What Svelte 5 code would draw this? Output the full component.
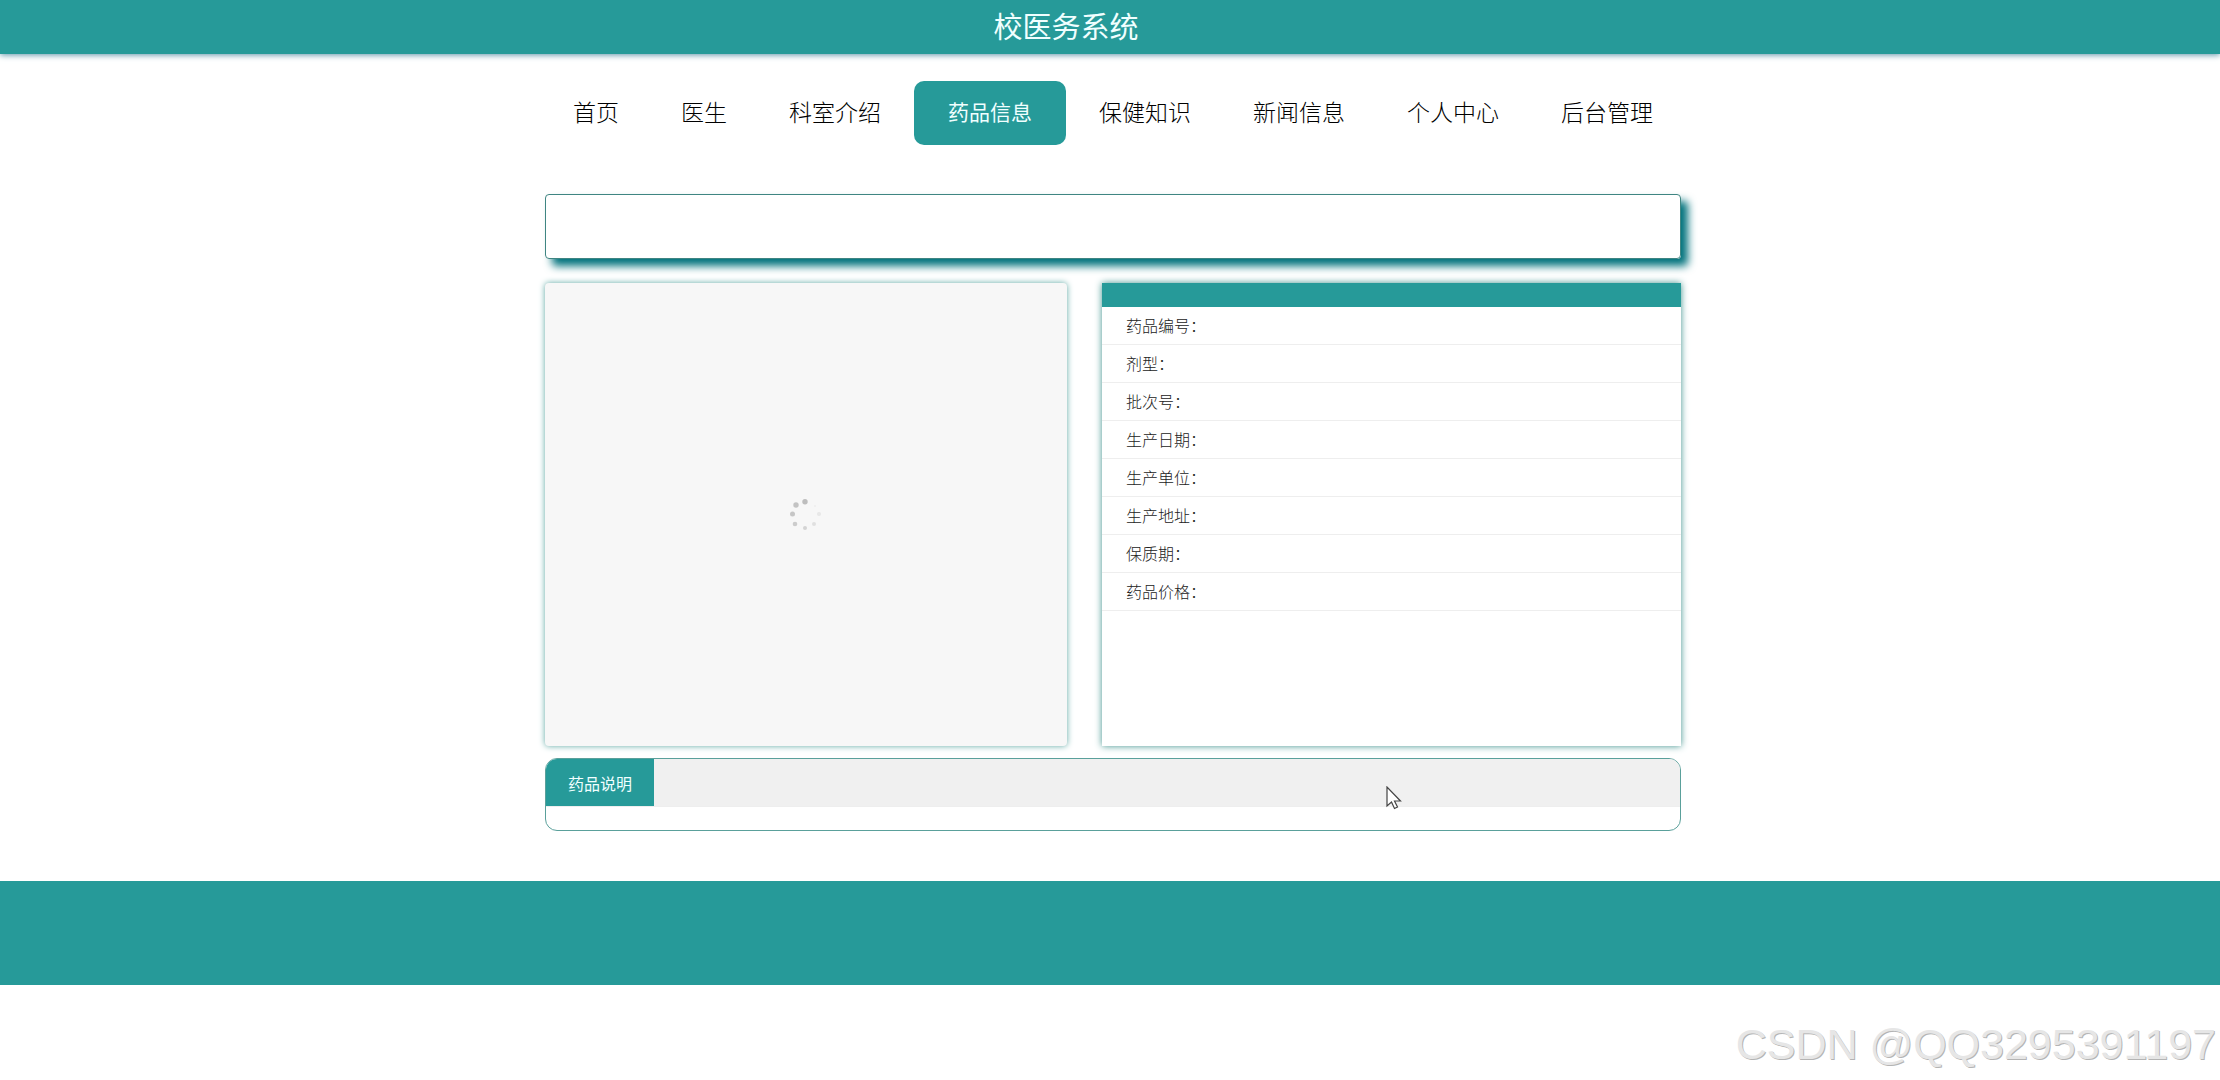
<script lang="ts">
	const menus = ['首页', '医生', '科室介绍', '药品信息', '保健知识', '新闻信息', '个人中心', '后台管理'];
	const fields = ['药品编号', '剂型', '批次号', '生产日期', '生产单位', '生产地址', '保质期', '药品价格'];

	// loading dots, clockwise from the top right
	const dots = [
		{ x: 25, y: 7, r: 1, opacity: 0.15 },
		{ x: 29, y: 15, r: 2, opacity: 0.25 },
		{ x: 24, y: 25, r: 2, opacity: 0.4 },
		{ x: 15, y: 29, r: 2, opacity: 0.6 },
		{ x: 5, y: 25, r: 2.3, opacity: 0.75 },
		{ x: 2.5, y: 15, r: 2.5, opacity: 0.85 },
		{ x: 6, y: 6, r: 2.7, opacity: 0.9 },
		{ x: 15, y: 2.8, r: 2.7, opacity: 1 }
	];

	let active = $state('药品信息');
</script>

<header class="header">
	<h1>校医务系统</h1>
</header>

<main class="page">
	<nav class="nav">
		{#each menus as menu}
			<a href="#{menu}" class:active={menu === active} onclick={() => (active = menu)}>{menu}</a>
		{/each}
	</nav>

	<div class="title-box"></div>

	<div class="detail">
		<div class="picture">
			<svg class="loading" viewBox="0 0 32 32" aria-hidden="true">
				{#each dots as dot}
					<circle cx={dot.x} cy={dot.y} r={dot.r} opacity={dot.opacity} />
				{/each}
			</svg>
		</div>
		<div class="info">
			<div class="info-head"></div>
			<ul>
				{#each fields as field}
					<li>{field}：</li>
				{/each}
			</ul>
		</div>
	</div>

	<section class="tabs">
		<div class="tab-bar">
			<button type="button">药品说明</button>
		</div>
		<div class="tab-body"></div>
	</section>
</main>

<footer class="footer"></footer>

<div class="watermark">CSDN @QQ3295391197</div>

<svg class="cursor" viewBox="0 0 16 24" aria-hidden="true">
	<path d="M1 1v19l4.5-4 3 6.5 3-1.5-3-6h6z" />
</svg>

<style>
	:global(body) {
		margin: 0;
		background: #fff;
		font-family: 'Noto Sans CJK SC', sans-serif;
	}
	.header {
		display: flex;
		justify-content: center;
		padding: 0 88px 4px 0;
		background: #269a99;
		box-shadow: 0 1px 6px #5d93a8;
	}
	.header h1 {
		margin: 0;
		color: #f0ffff;
		font-size: 29px;
		font-weight: 400;
		line-height: 50px;
	}
	.page {
		max-width: 1136px;
		margin: 0 auto;
		padding: 27px 0 50px 6px;
	}
	.nav {
		display: flex;
		justify-content: center;
		margin-bottom: 49px;
	}
	.nav a {
		flex-shrink: 0;
		padding: 0 31px 4px;
		color: #000;
		font-size: 23px;
		font-weight: 300;
		line-height: 60px;
		text-decoration: none;
	}
	.nav a.active {
		margin: 0 2px;
		padding: 0 34px 4px;
		border-radius: 10px;
		background: #269a99;
		color: #f0ffff;
		font-size: 21px;
		font-weight: 400;
	}
	.title-box {
		box-sizing: border-box;
		height: 65px;
		margin-bottom: 24px;
		border: 1px solid #3f8582;
		border-radius: 4px;
		box-shadow: 7px 7px 8px #00727c;
	}
	.detail {
		display: grid;
		grid-template-columns: 522fr 579fr;
		gap: 35px;
		height: 463px;
		margin-bottom: 12px;
	}
	.picture {
		display: flex;
		justify-content: center;
		align-items: center;
		border-radius: 4px;
		background: #f7f7f7;
		box-shadow: 0 0 6px #5fa8a4;
	}
	.loading {
		width: 32px;
		height: 32px;
		fill: #bdbdbd;
	}
	.info {
		background: #fff;
		box-shadow: 0 0 7px #3f928d;
	}
	.info-head {
		height: 24px;
		background: #269a99;
	}
	.info ul {
		margin: 0;
		padding: 0;
		list-style: none;
	}
	.info li {
		padding-left: 24px;
		border-bottom: 1px solid #eee;
		color: #222;
		font-size: 16px;
		font-weight: 300;
		line-height: 37px;
	}
	.tabs {
		overflow: hidden;
		border: 1px solid #5aa09b;
		border-radius: 12px;
	}
	.tab-bar {
		display: flex;
		height: 47px;
		border-bottom: 1px solid #eee;
		background: #f0f0f0;
	}
	.tab-bar button {
		padding: 0 22px;
		border: 0;
		background: #269a99;
		color: #f0ffff;
		font: inherit;
		font-size: 16px;
	}
	.tab-body {
		height: 23px;
	}
	.footer {
		height: 104px;
		background: #269a99;
	}
	.watermark {
		position: absolute;
		right: 4px;
		bottom: 12px;
		color: #e6e6e6;
		font-family: 'Liberation Sans', Arial, sans-serif;
		font-size: 43px;
		line-height: 48px;
		text-shadow: 1px 1px 0 #b4b4b4;
	}
	.cursor {
		position: absolute;
		top: 786px;
		left: 1386px;
		width: 16px;
		height: 24px;
		fill: #fff;
		stroke: #444;
		stroke-width: 1.2;
	}
</style>
